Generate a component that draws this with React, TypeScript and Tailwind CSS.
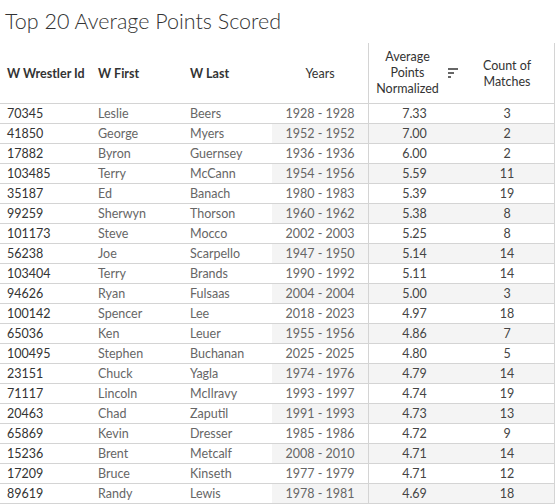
import React from "react";

const rows: [string, string, string, string, string, string][] = [
  ["70345", "Leslie", "Beers", "1928 - 1928", "7.33", "3"],
  ["41850", "George", "Myers", "1952 - 1952", "7.00", "2"],
  ["17882", "Byron", "Guernsey", "1936 - 1936", "6.00", "2"],
  ["103485", "Terry", "McCann", "1954 - 1956", "5.59", "11"],
  ["35187", "Ed", "Banach", "1980 - 1983", "5.39", "19"],
  ["99259", "Sherwyn", "Thorson", "1960 - 1962", "5.38", "8"],
  ["101173", "Steve", "Mocco", "2002 - 2003", "5.25", "8"],
  ["56238", "Joe", "Scarpello", "1947 - 1950", "5.14", "14"],
  ["103404", "Terry", "Brands", "1990 - 1992", "5.11", "14"],
  ["94626", "Ryan", "Fulsaas", "2004 - 2004", "5.00", "3"],
  ["100142", "Spencer", "Lee", "2018 - 2023", "4.97", "18"],
  ["65036", "Ken", "Leuer", "1955 - 1956", "4.86", "7"],
  ["100495", "Stephen", "Buchanan", "2025 - 2025", "4.80", "5"],
  ["23151", "Chuck", "Yagla", "1974 - 1976", "4.79", "14"],
  ["71117", "Lincoln", "McIlravy", "1993 - 1997", "4.74", "19"],
  ["20463", "Chad", "Zaputil", "1991 - 1993", "4.73", "13"],
  ["65869", "Kevin", "Dresser", "1985 - 1986", "4.72", "9"],
  ["15236", "Brent", "Metcalf", "2008 - 2010", "4.71", "14"],
  ["17209", "Bruce", "Kinseth", "1977 - 1979", "4.71", "12"],
  ["89619", "Randy", "Lewis", "1978 - 1981", "4.69", "18"],
];

const grid = "grid grid-cols-[91px_92px_89px_96px_92px_94px] grid-rows-[19px]";

export default function App() {
  return (
    <div
      className="w-[556px] h-[504px] bg-white overflow-hidden"
      style={{ fontFamily: "Lato, 'Open Sans', Arial, sans-serif" }}
    >
      <div className="h-[43px] pl-[5px] pt-[7px] text-[21.5px] leading-[28px] text-[#333] font-light">
        Top 20 Average Points Scored
      </div>
      <div className="w-[555px] border-r border-[#d4d4d4]">
        <div className="grid grid-cols-[91px_92px_89px_96px_92px_94px] h-[61px] border-b border-[#d4d4d4] text-[12.5px] font-bold text-[#333]">
          <div className="flex items-center pl-[7px] pt-[2px]">W Wrestler Id</div>
          <div className="flex items-center pl-[7px] pt-[2px]">W First</div>
          <div className="flex items-center pl-[7px] pt-[2px]">W Last</div>
          <div className="flex items-center justify-center font-normal pt-[2px]">Years</div>
          <div className="relative flex items-center justify-center pr-[14px] border-l border-[#d4d4d4] font-normal text-center leading-[16px]">
            <span>
              Average
              <br />
              Points
              <br />
              Normalized
            </span>
            <div className="absolute left-[79px] top-[25px] flex flex-col gap-[2px]">
              <div className="w-[10px] h-[2px] bg-[#666]" />
              <div className="w-[6px] h-[2px] bg-[#666]" />
              <div className="w-[3px] h-[2px] bg-[#666]" />
            </div>
          </div>
          <div className="flex items-center justify-center font-normal text-center leading-[16px] pt-[1px]">
            <span>
              Count of
              <br />
              Matches
            </span>
          </div>
        </div>
        {rows.map((r, i) => {
          const band = i % 2 === 1 ? "bg-[#f4f4f4]" : "bg-white";
          return (
            <div key={i} className={`${grid} h-[20px] border-b border-[#d4d4d4] text-[12.5px] leading-[19px]`}>
              <div className="pl-[7px] text-[#333]">{r[0]}</div>
              <div className="pl-[7px] text-[#666]">{r[1]}</div>
              <div className="pl-[7px] text-[#666]">{r[2]}</div>
              <div className={`${band} text-center text-[#666]`}>{r[3]}</div>
              <div className={`${band} text-center text-[#444] border-l border-[#d4d4d4]`}>{r[4]}</div>
              <div className={`${band} text-center text-[#444]`}>{r[5]}</div>
            </div>
          );
        })}
      </div>
    </div>
  );
}
